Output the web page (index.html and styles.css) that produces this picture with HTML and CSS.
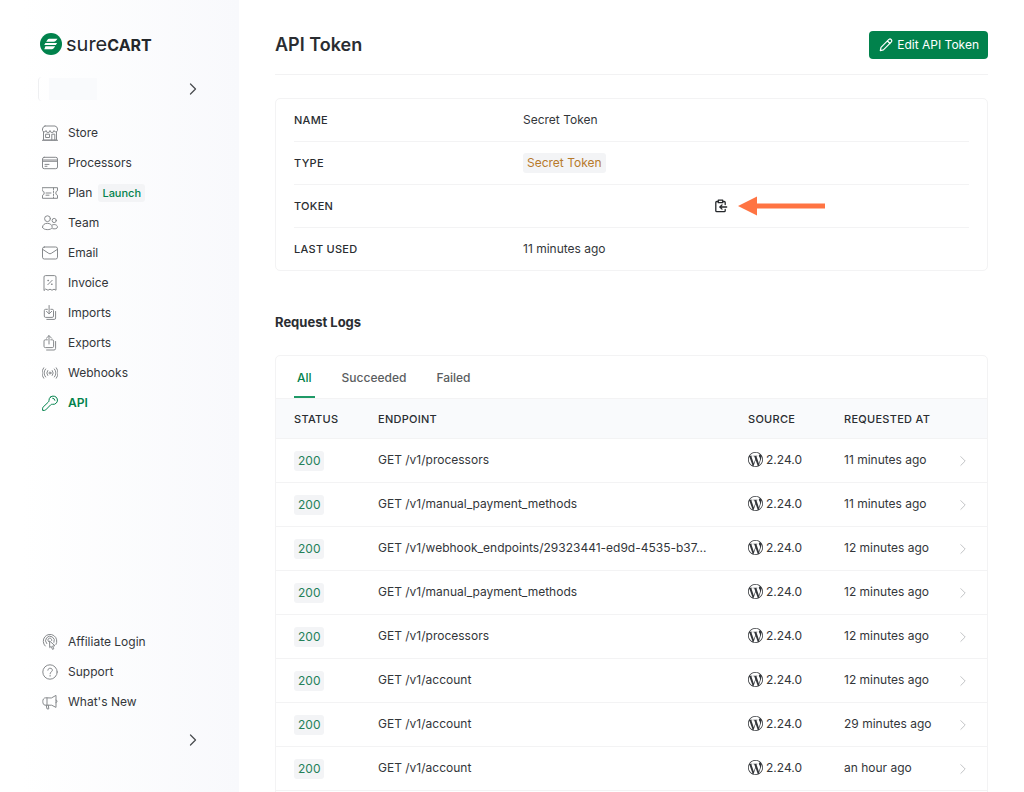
FILE: index.html
```html
<!DOCTYPE html>
<html lang="en">
<head>
<meta charset="utf-8">
<meta name="viewport" content="width=device-width, initial-scale=1">
<title>API Token</title>
<link rel="stylesheet" href="styles.css">
</head>
<body>
<svg class="defs" aria-hidden="true">
  <symbol id="chevron" viewBox="0 0 16 16"><path d="M5.5 3l5 5-5 5"/></symbol>
  <symbol id="wordpress" viewBox="0 0 24 24"><path d="M21.469 6.825c.84 1.537 1.318 3.3 1.318 5.175 0 3.979-2.156 7.456-5.363 9.325l3.295-9.527c.615-1.54.82-2.771.82-3.864 0-.405-.026-.78-.07-1.11m-7.981.105c.647-.03 1.232-.105 1.232-.105.582-.075.514-.93-.067-.899 0 0-1.755.135-2.88.135-1.064 0-2.85-.15-2.85-.15-.585-.03-.661.855-.075.885 0 0 .54.061 1.125.09l1.68 4.605-2.37 7.08L5.354 6.9c.649-.03 1.234-.1 1.234-.1.585-.075.516-.93-.065-.896 0 0-1.746.138-2.874.138-.2 0-.438-.008-.69-.015C4.911 3.15 8.235 1.215 12 1.215c2.809 0 5.365 1.072 7.286 2.833-.046-.003-.091-.009-.141-.009-1.06 0-1.812.923-1.812 1.914 0 .89.513 1.643 1.06 2.531.411.72.89 1.643.89 2.977 0 .915-.354 1.994-.821 3.479l-1.075 3.585-3.9-11.61.001.014zM12 22.784c-1.059 0-2.081-.153-3.048-.437l3.237-9.406 3.315 9.087c.024.053.05.101.078.149-1.12.393-2.325.609-3.582.609M1.211 12c0-1.564.336-3.05.935-4.39L7.29 21.709C3.694 19.96 1.212 16.271 1.211 12M12 0C5.385 0 0 5.385 0 12s5.385 12 12 12 12-5.385 12-12S18.615 0 12 0"/></symbol>
</svg>
<div class="app">
  <aside class="sidebar">
    <a class="logo" href="#" aria-label="SureCart">
      <svg class="logo-mark" viewBox="0 0 22 22" aria-hidden="true"><circle cx="11" cy="11" r="11" fill="#01824c"/><path d="M9.3 5.8h8.2l-1.6 1.9q-.9 1-2.2 1H6.2l1.1-1.8q.7-1.1 2-1.1zM5.4 9.9h11.7l-1.3 2.2H4.2zM5.4 13.3h9.8l-1.2 1.8q-.7 1.1-2 1.1H4.3z" fill="#fff"/></svg>
      <span class="logo-text">sure<b>CART</b></span>
    </a>
    <button class="switcher store-switcher" aria-label="Switch store"><span class="store-name"></span><svg class="chevron"><use href="#chevron"/></svg></button>
    <nav class="nav" aria-label="Main">
      <a href="#"><svg viewBox="0 0 16 16"><path d="M1.5 7v8h13V7M3 1h10q2.5.8 2.5 3v1.5a1.8 1.8 0 0 1-3.5 0 1.9 1.9 0 0 1-4 0 1.9 1.9 0 0 1-4 0 1.8 1.8 0 0 1-3.5 0V4Q.5 1.8 3 1zM0 15.3h16M4 9.2h3.5v3.3H4zM9.8 15V9.2h3V15"/></svg>Store</a>
      <a href="#"><svg viewBox="0 0 16 16"><rect x=".5" y="2.3" width="15" height="11.4" rx="1.7"/><path d="M.5 5h15M.5 6.3h15M3 9.4h4M3 11.3h2"/></svg>Processors</a>
      <a href="#"><svg viewBox="0 0 16 16"><path d="M.5 2.7h15v3a2.4 2.4 0 0 0 0 4.6v3H.5v-3a2.4 2.4 0 0 0 0-4.6zM4 8h5M4 10.2h3"/><path d="M11.5 3v10" stroke-dasharray="1.5 1.5"/></svg>Plan<span class="badge plan-badge">Launch</span></a>
      <a href="#"><svg viewBox="0 0 16 16"><circle cx="5.5" cy="3.7" r="2.9"/><circle cx="12.2" cy="5.5" r="2.1"/><path d="M.5 12.2C.5 9.8 2.7 8.3 5.3 8.3s4.9 1.5 4.9 3.9c0 3.3-9.7 3.3-9.7 0zM10.2 10c2.4-1.3 5.3 0 5.3 2.1 0 1.6-2.9 2.1-4.8 1.6"/></svg>Team</a>
      <a href="#"><svg viewBox="0 0 16 16"><rect x=".5" y="2" width="15" height="12" rx="1.8"/><path d="M.7 4.4l6.1 4q1.2.8 2.4 0l6.1-4"/></svg>Email</a>
      <a href="#"><svg viewBox="0 0 16 16"><path d="M2 15.2V2Q2 .6 3.5.6h9Q14 .6 14 2v13.2l-2-1-2 1-2-1-2 1-2-1zM5.8 9.7l4.4-4.4"/><path d="M6 5.5h.4M9.6 9.3h.4" stroke-width="1.5"/></svg>Invoice</a>
      <a href="#"><svg viewBox="0 0 16 16"><path d="M5.4 4.3H3.6q-1.3 0-1.3 1.3v5.5q0 1.3 1.3 1.3h6.6q1.3 0 1.3-1.3V5.6q0-1.3-1.3-1.3H8.8M7.1.5v8.2M4.5 6.3l2.6 2.6 2.6-2.6M13.6 6.5V13q0 1.4-1.4 1.4H4.8"/></svg>Imports</a>
      <a href="#"><svg viewBox="0 0 16 16"><path d="M5.4 4.8H3.3Q2 4.8 2 6.1v5.2q0 1.3 1.3 1.3h7q1.3 0 1.3-1.3V6.1q0-1.3-1.3-1.3H8.8M7 9V.7M4.4 3.2L7 .6l2.6 2.6M13.6 6.5V13.4q0 1.6-1.6 1.6H4.6"/></svg>Exports</a>
      <a href="#"><svg viewBox="0 0 16 16"><circle cx="8" cy="8" r="1"/><path d="M5.7 5.5a4 4 0 0 0 0 5M10.3 5.5a4 4 0 0 1 0 5M3.6 4a6.4 6.4 0 0 0 0 8M12.4 4a6.4 6.4 0 0 1 0 8M1.7 2.8a9 9 0 0 0 0 10.4M14.3 2.8a9 9 0 0 1 0 10.4"/></svg>Webhooks</a>
      <a class="active" href="#" aria-current="page"><svg viewBox="0 0 16 16"><path d="M8.4 2.1a4.2 4.2 0 1 1 2.1 7.2q-1.1-.2-1.9.6l-4.9 5q-.5.5-1.2.5H.6v-2.2q0-.6.5-1.1l5.2-5q.8-.7.7-1.8-.1-2 1.4-3.2zM10.7 3.2q1.9 0 2.2 2.1"/></svg>API</a>
    </nav>
    <nav class="nav nav-bottom" aria-label="Help">
      <a href="#"><svg viewBox="0 0 16 16"><path d="M3.2 12A6.8 6.8 0 1 1 14 10.5M4.7 9.6a4.4 4.4 0 1 1 7.3-1.2M6.5 7.6a2 2 0 1 1 3.3-1.1M7.6 7.4l.1 6.2 1.5-1.2 1.3 3 1.3-.6-1.2-2.8 2-.2z"/></svg>Affiliate Login</a>
      <a href="#"><svg viewBox="0 0 16 16"><circle cx="8" cy="8" r="7.2"/><path d="M5.8 6.2c0-2.8 4.6-2.6 4.6 0 0 1.6-2.3 1.6-2.3 3.4M8.1 11.2v1"/></svg>Support</a>
      <a href="#"><svg viewBox="0 0 16 16"><path d="M9.7 3.8L14 1.4v12l-4.3-2.2H3.3C1.5 11.2.8 9.2.8 7.5s.7-3.7 2.5-3.7zM4.2 11.2l.8 3.7h1.8l-.5-3.7M5 4v7M14 6q1 .1 1 1.3t-1 1.3"/></svg>What's New</a>
    </nav>
    <button class="switcher" aria-label="Account menu"><span></span><svg class="chevron"><use href="#chevron"/></svg></button>
  </aside>
  <main class="main">
    <header class="page-head">
      <h1>API Token</h1>
      <button class="primary"><svg viewBox="0 0 14 14" aria-hidden="true"><path d="M1.3 12.7l.7-3.4 7.9-7.9q1.2-.9 2.2.1 1.2 1.2.3 2.3l-8 8zM8.5 3l2.5 2.5"/></svg>Edit API Token</button>
    </header>
    <section class="card">
      <dl class="details">
        <div><dt>Name</dt><dd>Secret Token</dd></div>
        <div><dt>Type</dt><dd><span class="badge warn">Secret Token</span></dd></div>
        <div><dt>Token</dt><dd><span class="token-value"></span>
          <button class="copy" aria-label="Copy token"><svg viewBox="0 0 14 14"><path d="M4 2.5H2.8q-1 0-1 1v8.2q0 1 1 1h7.4q1 0 1-1v-1.2M9 2.5h1.2q1 0 1 1v2M4.3 1.2h4.4v2.5H4.3zM12.7 8H6M8 5.9L5.8 8 8 10.1"/></svg></button>
          <svg class="arrow" viewBox="0 0 87 20" aria-hidden="true"><path d="M0 10L19 .5v7h68v5H19v7z"/></svg></dd></div>
        <div><dt>Last used</dt><dd>11 minutes ago</dd></div>
      </dl>
    </section>
    <h2>Request Logs</h2>
    <section class="card log-card">
      <div class="tabs" role="tablist">
        <button role="tab" aria-selected="true">All</button>
        <button role="tab" aria-selected="false">Succeeded</button>
        <button role="tab" aria-selected="false">Failed</button>
      </div>
      <table class="logs">
        <thead><tr><th class="c-status">Status</th><th>Endpoint</th><th class="c-source">Source</th><th class="c-time">Requested at</th><th class="c-go"></th></tr></thead>
        <tbody>
          <tr><td><span class="badge ok">200</span></td><td class="endpoint">GET /v1/processors</td><td><span class="source"><svg><use href="#wordpress"/></svg>2.24.0</span></td><td>11 minutes ago</td><td class="go"><svg class="chevron"><use href="#chevron"/></svg></td></tr>
          <tr><td><span class="badge ok">200</span></td><td class="endpoint">GET /v1/manual_payment_methods</td><td><span class="source"><svg><use href="#wordpress"/></svg>2.24.0</span></td><td>11 minutes ago</td><td class="go"><svg class="chevron"><use href="#chevron"/></svg></td></tr>
          <tr><td><span class="badge ok">200</span></td><td class="endpoint">GET /v1/webhook_endpoints/29323441-ed9d-4535-b37...</td><td><span class="source"><svg><use href="#wordpress"/></svg>2.24.0</span></td><td>12 minutes ago</td><td class="go"><svg class="chevron"><use href="#chevron"/></svg></td></tr>
          <tr><td><span class="badge ok">200</span></td><td class="endpoint">GET /v1/manual_payment_methods</td><td><span class="source"><svg><use href="#wordpress"/></svg>2.24.0</span></td><td>12 minutes ago</td><td class="go"><svg class="chevron"><use href="#chevron"/></svg></td></tr>
          <tr><td><span class="badge ok">200</span></td><td class="endpoint">GET /v1/processors</td><td><span class="source"><svg><use href="#wordpress"/></svg>2.24.0</span></td><td>12 minutes ago</td><td class="go"><svg class="chevron"><use href="#chevron"/></svg></td></tr>
          <tr><td><span class="badge ok">200</span></td><td class="endpoint">GET /v1/account</td><td><span class="source"><svg><use href="#wordpress"/></svg>2.24.0</span></td><td>12 minutes ago</td><td class="go"><svg class="chevron"><use href="#chevron"/></svg></td></tr>
          <tr><td><span class="badge ok">200</span></td><td class="endpoint">GET /v1/account</td><td><span class="source"><svg><use href="#wordpress"/></svg>2.24.0</span></td><td>29 minutes ago</td><td class="go"><svg class="chevron"><use href="#chevron"/></svg></td></tr>
          <tr><td><span class="badge ok">200</span></td><td class="endpoint">GET /v1/account</td><td><span class="source"><svg><use href="#wordpress"/></svg>2.24.0</span></td><td>an hour ago</td><td class="go"><svg class="chevron"><use href="#chevron"/></svg></td></tr>
        </tbody>
      </table>
    </section>
  </main>
</div>
</body>
</html>
```

FILE: styles.css
```css
* { box-sizing: border-box; }
body { margin: 0; font: 12px/20px Inter, "Liberation Sans", sans-serif; color: #33363a; background: #fff; }
button { font: inherit; color: inherit; border: 0; background: none; padding: 0; cursor: pointer; }
a { color: inherit; text-decoration: none; }
svg { flex: none; fill: none; stroke: currentColor; stroke-linecap: round; stroke-linejoin: round; }
.defs { position: absolute; width: 0; height: 0; }

.app { display: flex; height: 100vh; overflow: hidden; }
.sidebar { flex: none; width: 239px; padding: 32px 40px 40px 38px; display: flex; flex-direction: column; background: linear-gradient(90deg, #fff 22px, #f8f9fc); }
.logo { display: flex; align-items: center; gap: 4px; height: 24px; padding-left: 2px; }
.logo-mark { width: 22px; height: 22px; stroke: none; }
.logo-text { font-size: 20px; font-weight: 400; color: #24272b; }
.logo-text b { font-size: 16px; font-weight: 700; }
.switcher { display: flex; align-items: center; justify-content: space-between; height: 24px; border-radius: 4px; }
.switcher .chevron { width: 16px; height: 16px; color: #4a4d50; stroke-width: 1.3; margin-right: -2px; }
.store-switcher { margin: 21px 0 17px; border-left: 1px solid #eeeff1; }
.store-name { width: 48px; height: 22px; margin-left: 10px; background: #f9fafc; }
.nav a { display: flex; align-items: center; height: 30px; gap: 10px; padding-left: 4px; white-space: nowrap; }
.nav svg { width: 16px; height: 16px; color: #86898c; }
.nav .active, .nav .active svg { color: #01824c; }
.nav .active { font-weight: 600; }
.nav-bottom { margin-top: auto; margin-bottom: 11px; }

.badge { display: inline-block; border-radius: 3px; background: #f3f4f6; padding: 0 4px; }
.plan-badge { font-size: 11px; font-weight: 500; line-height: 18px; color: #01824c; margin-left: -4px; }
.warn { color: #b77a2c; }
.ok { color: #24815a; }

.main { flex: 1; min-width: 0; padding: 20px 36px 0; }
.page-head { display: flex; align-items: center; justify-content: space-between; height: 55px; padding-bottom: 4px; border-bottom: 1px solid #f2f2f3; }
h1 { margin: 0; font-size: 18px; font-weight: 600; line-height: 24px; color: #2a2d31; }
.primary { display: flex; align-items: center; gap: 4px; height: 28px; padding: 0 9px 0 10px; border-radius: 4px; background: #01824c; color: #fff; }
.primary svg { width: 14px; height: 14px; stroke-width: 1.2; }
h2 { margin: 40px 0 22px; font-size: 13px; font-weight: 700; line-height: 22px; color: #2a2d31; }

.card { border: 1px solid #f3f3f4; border-radius: 5px; }
.page-head + .card { margin-top: 23px; }
.log-card { padding-bottom: 20px; }
.details { margin: 0; padding: 0 18px; }
.details > div { display: flex; align-items: center; height: 43px; }
.details > div:first-child { height: 42px; }
.details > div + div { border-top: 1px solid #f3f3f4; }
dt { width: 229px; }
dt, th { font-size: 11px; font-weight: 500; letter-spacing: 0.025em; text-transform: uppercase; color: #2a2d31; }
dd { margin: 0; display: flex; align-items: center; }
.token-value { width: 191px; }
.copy { display: flex; margin-right: 10px; }
.copy svg { width: 14px; height: 14px; stroke-width: 1.3; color: #24272b; }
.arrow { width: 87px; height: 20px; fill: #ff7443; stroke: none; }

.tabs { display: flex; gap: 24px; height: 42px; padding: 4px 18px 0; }
.tabs button { padding: 0 3px; font-weight: 500; color: #5a5d60; border-bottom: 2px solid transparent; }
.tabs [aria-selected="true"] { color: #01824c; border-color: #1f9a67; }

.logs { width: 100%; table-layout: fixed; border-collapse: collapse; border-bottom: 1px solid #f3f3f4; }
th, td { padding: 0; text-align: left; border-top: 1px solid #f3f3f4; }
th { height: 40px; background: #f9fafc; }
td { height: 44px; padding-bottom: 2px; }
td:first-child, .go { padding-bottom: 0; }
.c-status { width: 102px; }
.c-source { width: 96px; }
.c-time { width: 112px; }
.c-go { width: 31px; }
th:first-child, td:first-child { padding-left: 18px; }
.endpoint { padding-right: 28px; overflow: hidden; text-overflow: ellipsis; white-space: nowrap; }
.source { display: flex; align-items: center; gap: 3px; }
.source svg { width: 15px; height: 15px; fill: #33363a; stroke: none; }
.go .chevron { display: block; width: 14px; height: 14px; color: #b9bbbe; }
```
